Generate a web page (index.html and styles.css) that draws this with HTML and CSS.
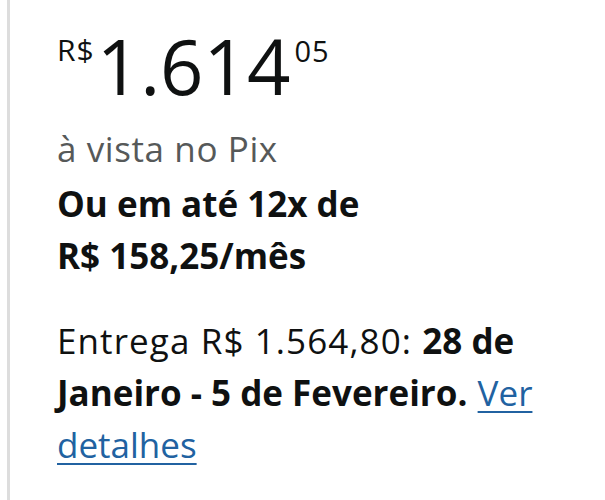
FILE: index.html
```html
<!DOCTYPE html>
<html lang="pt-BR">
<head>
    <meta charset="UTF-8">
    <meta name="viewport" content="width=device-width, initial-scale=1.0">
    <title>Preço</title>
    <link rel="stylesheet" href="styles.css">
</head>
<body>
    <div class="buybox">
        <div class="price">
            <span class="price_symbol">R$</span><span class="price_whole">1.614</span><span class="price_fraction">05</span>
        </div>

        <p class="pix">à vista no Pix</p>
        <p class="installments">Ou em até 12x de<br>R$ 158,25/mês</p>

        <p class="delivery">Entrega R$ 1.564,80: <b>28 de Janeiro - 5 de Fevereiro.</b> <a href="#">Ver detalhes</a></p>
    </div>
</body>
</html>
```

FILE: styles.css
```css
body {
    margin: 0;
    background-color: #fff;
    font-family: "Open Sans", "Noto Sans", sans-serif;
    color: #0f1111;
}

.buybox {
    margin-left: 7px;
    border-left: 3px solid #dddddd;
    padding: 28px 0 0 47px;
    height: 472px;
    font-size: 35px;
    line-height: 52px;
}

.price {
    display: flex;
    align-items: flex-start;
    line-height: 1;
    height: 95px;
}

.price_symbol {
    font-size: 30px;
    letter-spacing: 1px;
    margin-top: 7px;
    margin-right: 2px;
}

.price_whole {
    font-size: 76px;
}

.price_fraction {
    font-size: 29px;
    letter-spacing: 1px;
    margin-top: 8px;
    margin-left: 4px;
}

p {
    margin: 0;
}

.pix {
    color: #565959;
    letter-spacing: 0.6px;
}

.installments {
    margin-top: 3px;
    font-weight: bold;
}

.delivery {
    margin-top: 33px;
    max-width: 495px;
    letter-spacing: 1.1px;
}

.delivery b,
.delivery a {
    letter-spacing: 0;
}

.delivery a {
    color: #2162a1;
    text-decoration: underline;
    text-decoration-thickness: 2px;
    text-underline-offset: 5px;
}
```
